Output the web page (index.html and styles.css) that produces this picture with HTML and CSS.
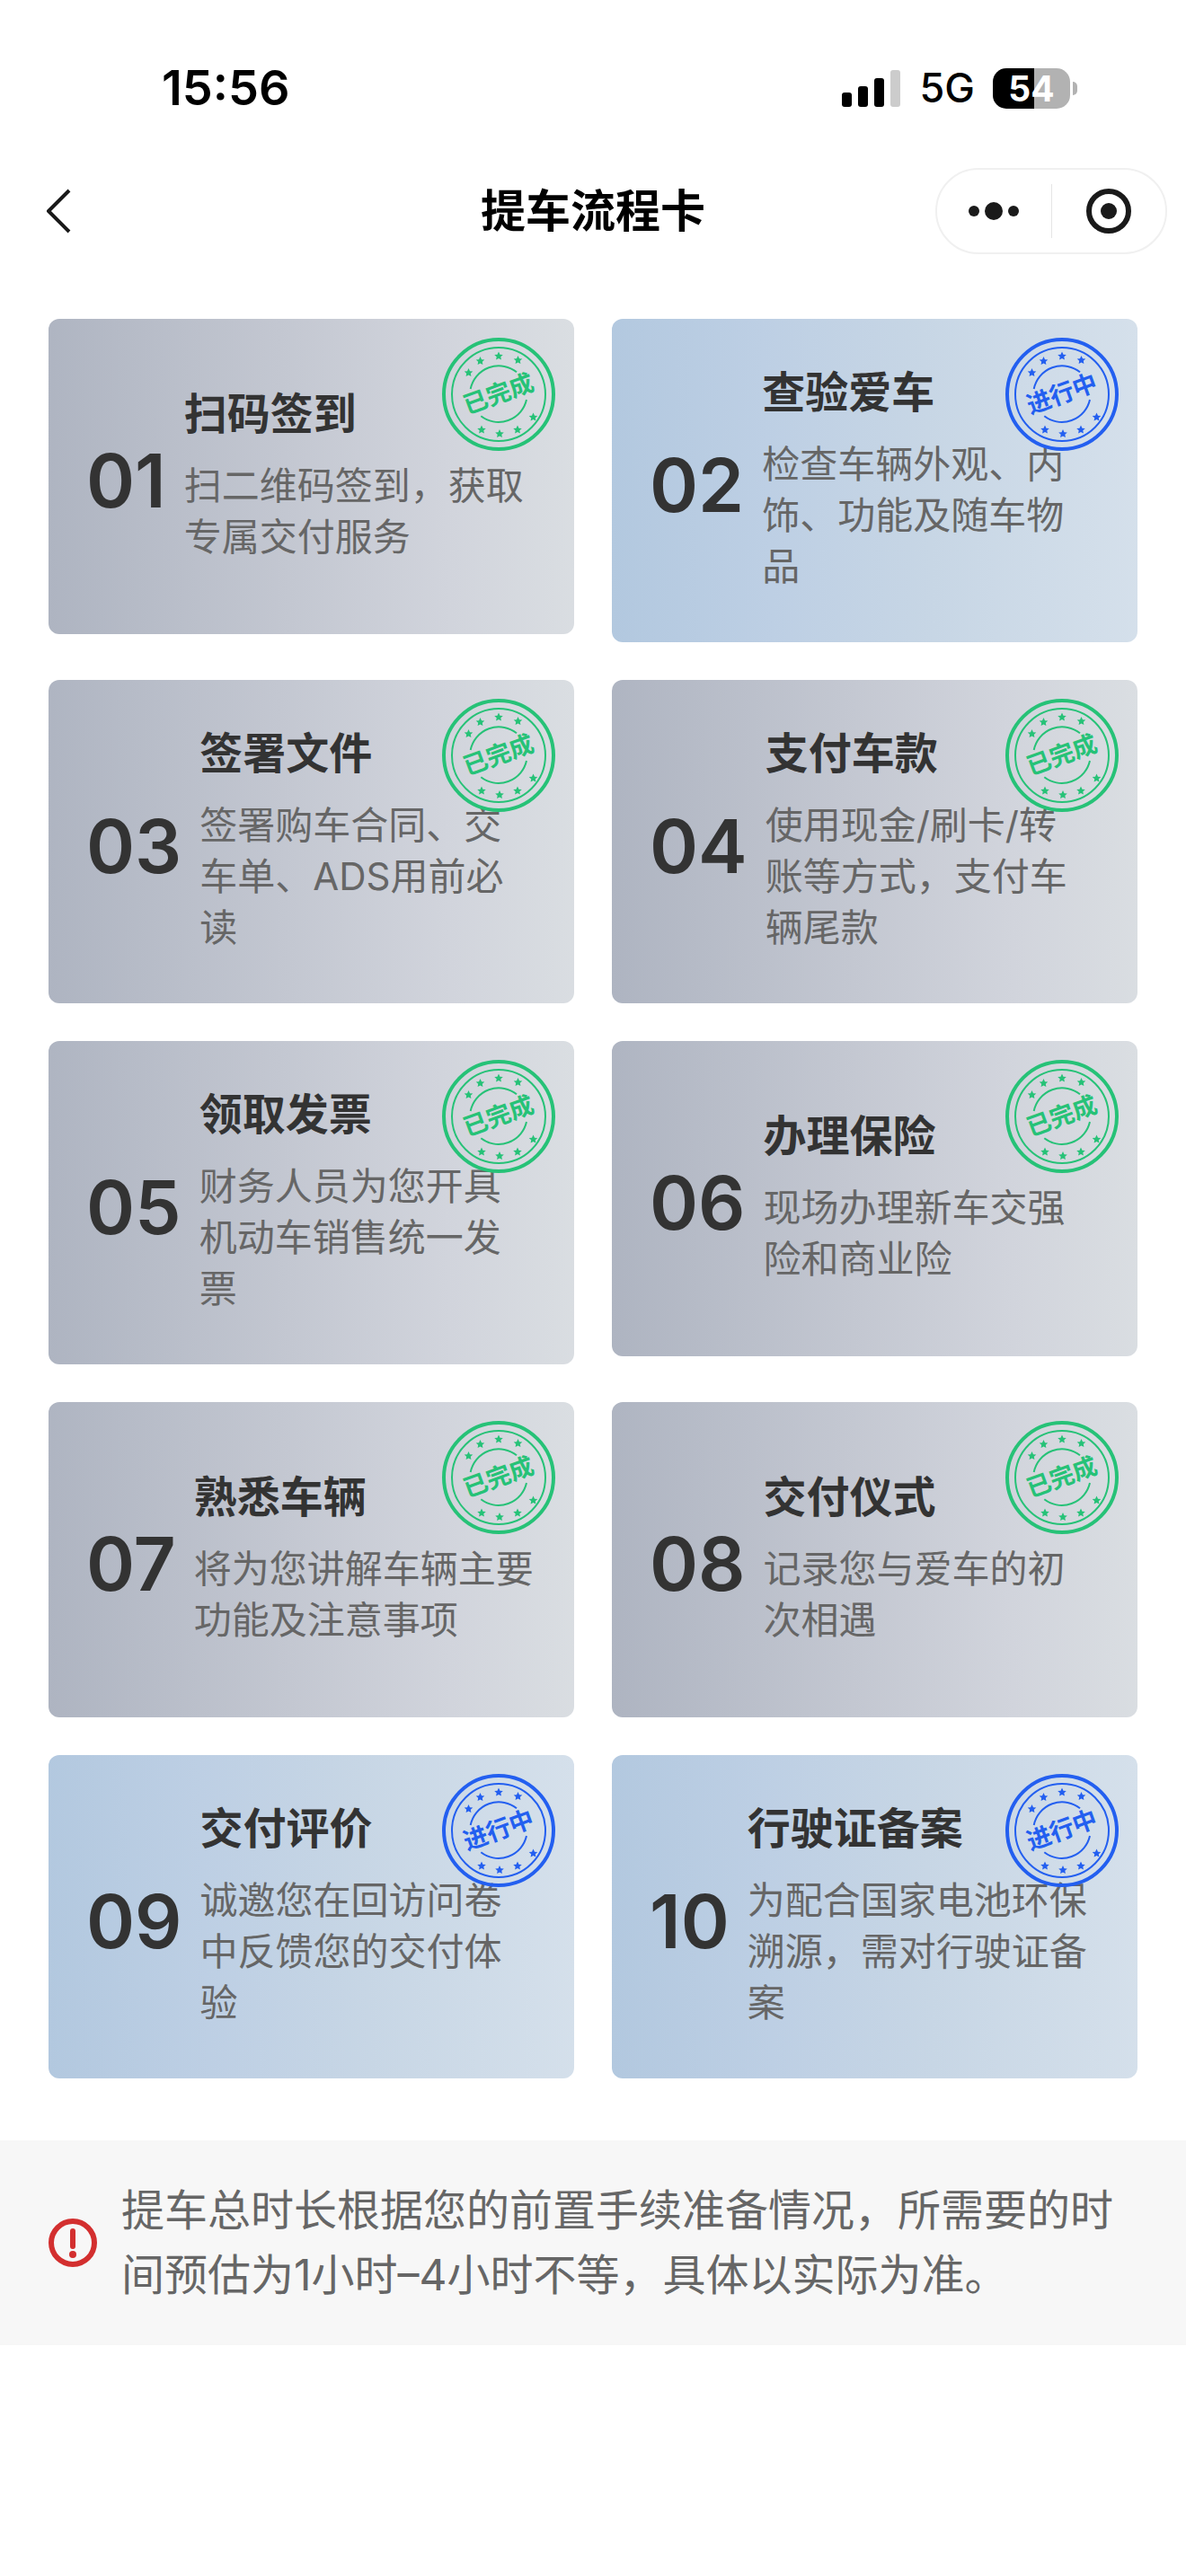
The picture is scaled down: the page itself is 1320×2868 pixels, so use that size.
FILE: index.html
```html
<!DOCTYPE html>
<html lang="zh-CN">
<head>
    <meta charset="UTF-8">
    <meta name="viewport" content="width=device-width, initial-scale=1.0">
    <title>提车流程卡</title>
    <link rel="stylesheet" href="styles.css">
</head>
<body>
    <!-- 印章外框 -->
    <svg class="defs" aria-hidden="true">
        <defs>
            <path id="star" fill="currentColor" d="M0 -5 L1.5 -1.8 L4.8 -1.5 L2.3 0.8 L2.9 4 L0 2.4 L-2.9 4 L-2.3 0.8 L-4.8 -1.5 L-1.5 -1.8 Z"/>
            <symbol id="stamp" viewBox="0 0 126 126">
                <g fill="none" stroke="currentColor">
                    <circle cx="63" cy="63" r="61" stroke-width="4"/>
                    <circle cx="63" cy="63" r="52" stroke-width="2"/>
                    <path stroke-width="2" d="M31.7 57 A32 32 0 0 1 83 38.3"/>
                    <path stroke-width="2" d="M43.3 87.3 A32 32 0 0 0 94 69"/>
                </g>
                <use href="#star" x="29.5" y="39"/>
                <use href="#star" x="42.5" y="26"/>
                <use href="#star" x="63" y="20.5"/>
                <use href="#star" x="84.5" y="25"/>
                <use href="#star" x="101.5" y="88.5"/>
                <use href="#star" x="84" y="102.5"/>
                <use href="#star" x="64" y="107"/>
                <use href="#star" x="44" y="102.5"/>
            </symbol>
        </defs>
    </svg>

    <div class="status-bar">
        <span class="time">15:56</span>
        <div class="status-right">
            <svg class="signal" viewBox="0 0 65 41" aria-hidden="true">
                <rect x="0" y="25" width="11" height="16" rx="3"/>
                <rect x="18" y="18" width="11" height="23" rx="3"/>
                <rect x="36" y="9" width="11" height="32" rx="3"/>
                <rect x="54" y="0" width="11" height="41" rx="3" fill="#cccccc"/>
            </svg>
            <span class="network">5G</span>
            <div class="battery"><span class="battery-level">54</span></div>
        </div>
    </div>

    <header class="nav">
        <button class="back" aria-label="返回">
            <svg viewBox="0 0 28 50" aria-hidden="true"><path d="M26 2 L3 25 L26 48" fill="none" stroke="#1a1a1a" stroke-width="4" stroke-linejoin="round"/></svg>
        </button>
        <h1>提车流程卡</h1>
        <div class="capsule">
            <button aria-label="更多">
                <svg viewBox="0 0 60 60" aria-hidden="true"><circle cx="8" cy="30" r="6"/><circle cx="30" cy="30" r="10"/><circle cx="52" cy="30" r="6"/></svg>
            </button>
            <button aria-label="关闭">
                <svg viewBox="0 0 60 60" aria-hidden="true"><circle cx="30" cy="30" r="22" fill="none" stroke="#1a1a1a" stroke-width="6"/><circle cx="30" cy="30" r="9"/></svg>
            </button>
        </div>
    </header>

    <main>
        <ol class="steps">
            <li class="card done">
                <span class="num">01</span>
                <div class="info">
                    <h2>扫码签到</h2>
                    <p>扫二维码签到，获取专属交付服务</p>
                </div>
                <svg class="stamp" viewBox="0 0 126 126"><use href="#stamp"/><text x="63" y="72" transform="rotate(-20 63 63)">已完成</text></svg>
            </li>
            <li class="card doing">
                <span class="num">02</span>
                <div class="info">
                    <h2>查验爱车</h2>
                    <p>检查车辆外观、内饰、功能及随车物品</p>
                </div>
                <svg class="stamp" viewBox="0 0 126 126"><use href="#stamp"/><text x="63" y="72" transform="rotate(-20 63 63)">进行中</text></svg>
            </li>
            <li class="card done">
                <span class="num">03</span>
                <div class="info">
                    <h2>签署文件</h2>
                    <p>签署购车合同、交车单、ADS用前必读</p>
                </div>
                <svg class="stamp" viewBox="0 0 126 126"><use href="#stamp"/><text x="63" y="72" transform="rotate(-20 63 63)">已完成</text></svg>
            </li>
            <li class="card done">
                <span class="num">04</span>
                <div class="info">
                    <h2>支付车款</h2>
                    <p>使用现金/刷卡/转<br>账等方式，支付车辆尾款</p>
                </div>
                <svg class="stamp" viewBox="0 0 126 126"><use href="#stamp"/><text x="63" y="72" transform="rotate(-20 63 63)">已完成</text></svg>
            </li>
            <li class="card done">
                <span class="num">05</span>
                <div class="info">
                    <h2>领取发票</h2>
                    <p>财务人员为您开具机动车销售统一发票</p>
                </div>
                <svg class="stamp" viewBox="0 0 126 126"><use href="#stamp"/><text x="63" y="72" transform="rotate(-20 63 63)">已完成</text></svg>
            </li>
            <li class="card done">
                <span class="num">06</span>
                <div class="info">
                    <h2>办理保险</h2>
                    <p>现场办理新车交强险和商业险</p>
                </div>
                <svg class="stamp" viewBox="0 0 126 126"><use href="#stamp"/><text x="63" y="72" transform="rotate(-20 63 63)">已完成</text></svg>
            </li>
            <li class="card done">
                <span class="num">07</span>
                <div class="info">
                    <h2>熟悉车辆</h2>
                    <p>将为您讲解车辆主要功能及注意事项</p>
                </div>
                <svg class="stamp" viewBox="0 0 126 126"><use href="#stamp"/><text x="63" y="72" transform="rotate(-20 63 63)">已完成</text></svg>
            </li>
            <li class="card done">
                <span class="num">08</span>
                <div class="info">
                    <h2>交付仪式</h2>
                    <p>记录您与爱车的初次相遇</p>
                </div>
                <svg class="stamp" viewBox="0 0 126 126"><use href="#stamp"/><text x="63" y="72" transform="rotate(-20 63 63)">已完成</text></svg>
            </li>
            <li class="card doing">
                <span class="num">09</span>
                <div class="info">
                    <h2>交付评价</h2>
                    <p>诚邀您在回访问卷中反馈您的交付体验</p>
                </div>
                <svg class="stamp" viewBox="0 0 126 126"><use href="#stamp"/><text x="63" y="72" transform="rotate(-20 63 63)">进行中</text></svg>
            </li>
            <li class="card doing">
                <span class="num">10</span>
                <div class="info">
                    <h2>行驶证备案</h2>
                    <p>为配合国家电池环保溯源，需对行驶证备案</p>
                </div>
                <svg class="stamp" viewBox="0 0 126 126"><use href="#stamp"/><text x="63" y="72" transform="rotate(-20 63 63)">进行中</text></svg>
            </li>
        </ol>

        <div class="notice">
            <svg viewBox="0 0 54 54" aria-hidden="true">
                <circle cx="27" cy="27" r="24" fill="none" stroke="#d32f2f" stroke-width="6"/>
                <rect x="24" y="11" width="6" height="23" rx="3" fill="#d32f2f"/>
                <circle cx="27" cy="40" r="4" fill="#d32f2f"/>
            </svg>
            <p>提车总时长根据您的前置手续准备情况，所需要的时间预估为1小时–4小时不等，具体以实际为准。</p>
        </div>
    </main>
</body>
</html>
```
FILE: styles.css
```css
* {
    box-sizing: border-box;
    margin: 0;
    padding: 0;
}
body {
    font-family: Inter, "Noto Sans CJK SC", sans-serif;
    background: #fff;
    color: #333;
}
button {
    border: none;
    background: none;
    cursor: pointer;
}
.defs {
    position: absolute;
    width: 0;
    height: 0;
}

/* 状态栏 */
.status-bar {
    display: flex;
    justify-content: space-between;
    align-items: center;
    padding: 62px 122px 0 180px;
    color: #000;
    line-height: 72px;
}
.time {
    font-size: 54px;
    font-weight: 600;
}
.status-right {
    display: flex;
    align-items: center;
}
.signal {
    width: 65px;
    height: 41px;
    margin-right: 22px;
}
.network {
    font-size: 45px;
    font-weight: 500;
    margin-right: 20px;
}
.battery {
    position: relative;
    width: 86px;
    height: 45px;
    margin-right: 7px;
}
.battery::after {
    content: '';
    position: absolute;
    top: 15px;
    right: -8px;
    width: 5px;
    height: 15px;
    border-radius: 0 5px 5px 0;
    background: #b2b2b2;
}
.battery-level {
    display: block;
    border-radius: 15px;
    background: linear-gradient(90deg, #000 54%, #b2b2b2 54%);
    color: #fff;
    font-size: 39px;
    font-weight: 700;
    line-height: 45px;
    text-align: center;
}

/* 导航栏 */
.nav {
    display: grid;
    grid-template-columns: 1fr auto 1fr;
    align-items: center;
    margin-top: 53px;
    padding: 0 21px;
}
.back {
    justify-self: start;
    height: 96px;
    padding: 0 30px;
}
.back svg {
    display: block;
    width: 28px;
    height: 50px;
}
.nav h1 {
    color: #000;
    font-size: 50px;
    font-weight: 700;
    line-height: 72px;
}
.capsule {
    justify-self: end;
    display: flex;
    align-items: center;
    width: 258px;
    height: 96px;
    border: 2px solid #f0f0f0;
    border-radius: 48px;
}
.capsule button {
    flex: 1;
    height: 60px;
}
.capsule button + button {
    border-left: 1px solid #e5e5e5;
}
.capsule svg {
    width: 60px;
    height: 60px;
    fill: #1a1a1a;
}

/* 流程卡片 */
.steps {
    display: grid;
    grid-template-columns: 1fr 1fr;
    align-items: start;
    gap: 42px;
    padding: 72px 54px 69px;
    list-style: none;
}
.card {
    position: relative;
    display: flex;
    align-items: center;
    gap: 20px;
    min-height: 351px;
    padding: 43px 42px 56px;
    border-radius: 12px;
}
.done {
    background: linear-gradient(88deg, #aeb4c1, #c3c7d1 45%, #d1d4dc 75%, #dadee2);
}
.doing {
    background: linear-gradient(88deg, #b2c8df, #bdcfe4 30%, #c7d6e5 60%, #d5e0eb);
}
.num {
    padding-top: 24px;
    font-size: 82px;
    font-weight: 600;
    line-height: 96px;
}
.info h2 {
    margin-bottom: 12px;
    font-size: 48px;
    font-weight: 700;
    line-height: 78px;
}
.info p {
    color: #666;
    font-size: 42px;
    line-height: 57px;
}
.stamp {
    position: absolute;
    top: 21px;
    right: 21px;
    width: 126px;
    height: 126px;
}
.stamp text {
    fill: currentColor;
    font-size: 27px;
    font-weight: 700;
    text-anchor: middle;
}
.done .stamp {
    color: #26c277;
}
.doing .stamp {
    color: #235ff0;
}

/* 底部提示 */
.notice {
    display: flex;
    align-items: center;
    gap: 27px;
    padding: 42px 54px;
    background: #f7f7f7;
}
.notice svg {
    flex-shrink: 0;
    width: 54px;
    height: 54px;
}
.notice p {
    color: #666;
    font-size: 48px;
    line-height: 72px;
}
```
